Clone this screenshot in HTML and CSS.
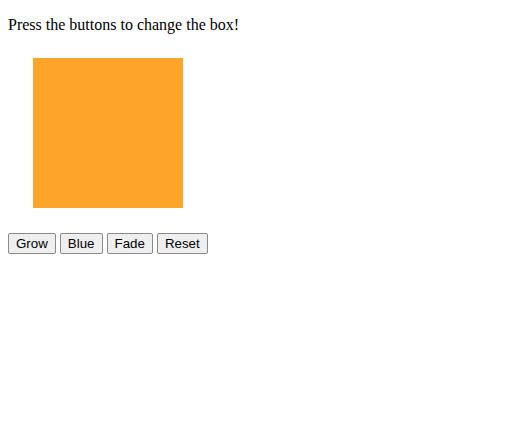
FILE: index.html
```html
<!DOCTYPE html>
<html>
<head>
<meta charset="utf-8">
<link rel="stylesheet" href="styles.css">
</head>
<body>
<p class="intro">Press the buttons to change the box!</p>
<div class="box"></div>
<div class="controls"><button class="btn">Grow</button> <button class="btn">Blue</button> <button class="btn">Fade</button> <button class="btn">Reset</button></div>
</body>
</html>
```
FILE: styles.css
```css
html, body {
  margin: 0;
  padding: 0;
}
body {
  padding: 8px;
  font-family: "Liberation Serif", "Times New Roman", serif;
  font-size: 16px;
  background: #fff;
  color: #000;
}
.intro {
  margin: 8px 0 16px;
  line-height: 17px;
}
.box {
  width: 150px;
  height: 150px;
  margin: 25px;
  background: #fea42b;
}
.controls {
  font-size: 16px;
}
.btn {
  font-family: "Liberation Sans", Arial, sans-serif;
  font-size: 13.33px;
  line-height: 15px;
  padding: 2px 7px;
  margin: 0;
  background: #efefef;
  border: 1px solid #8a8a8a;
  border-radius: 2px;
  color: #000;
}
```
